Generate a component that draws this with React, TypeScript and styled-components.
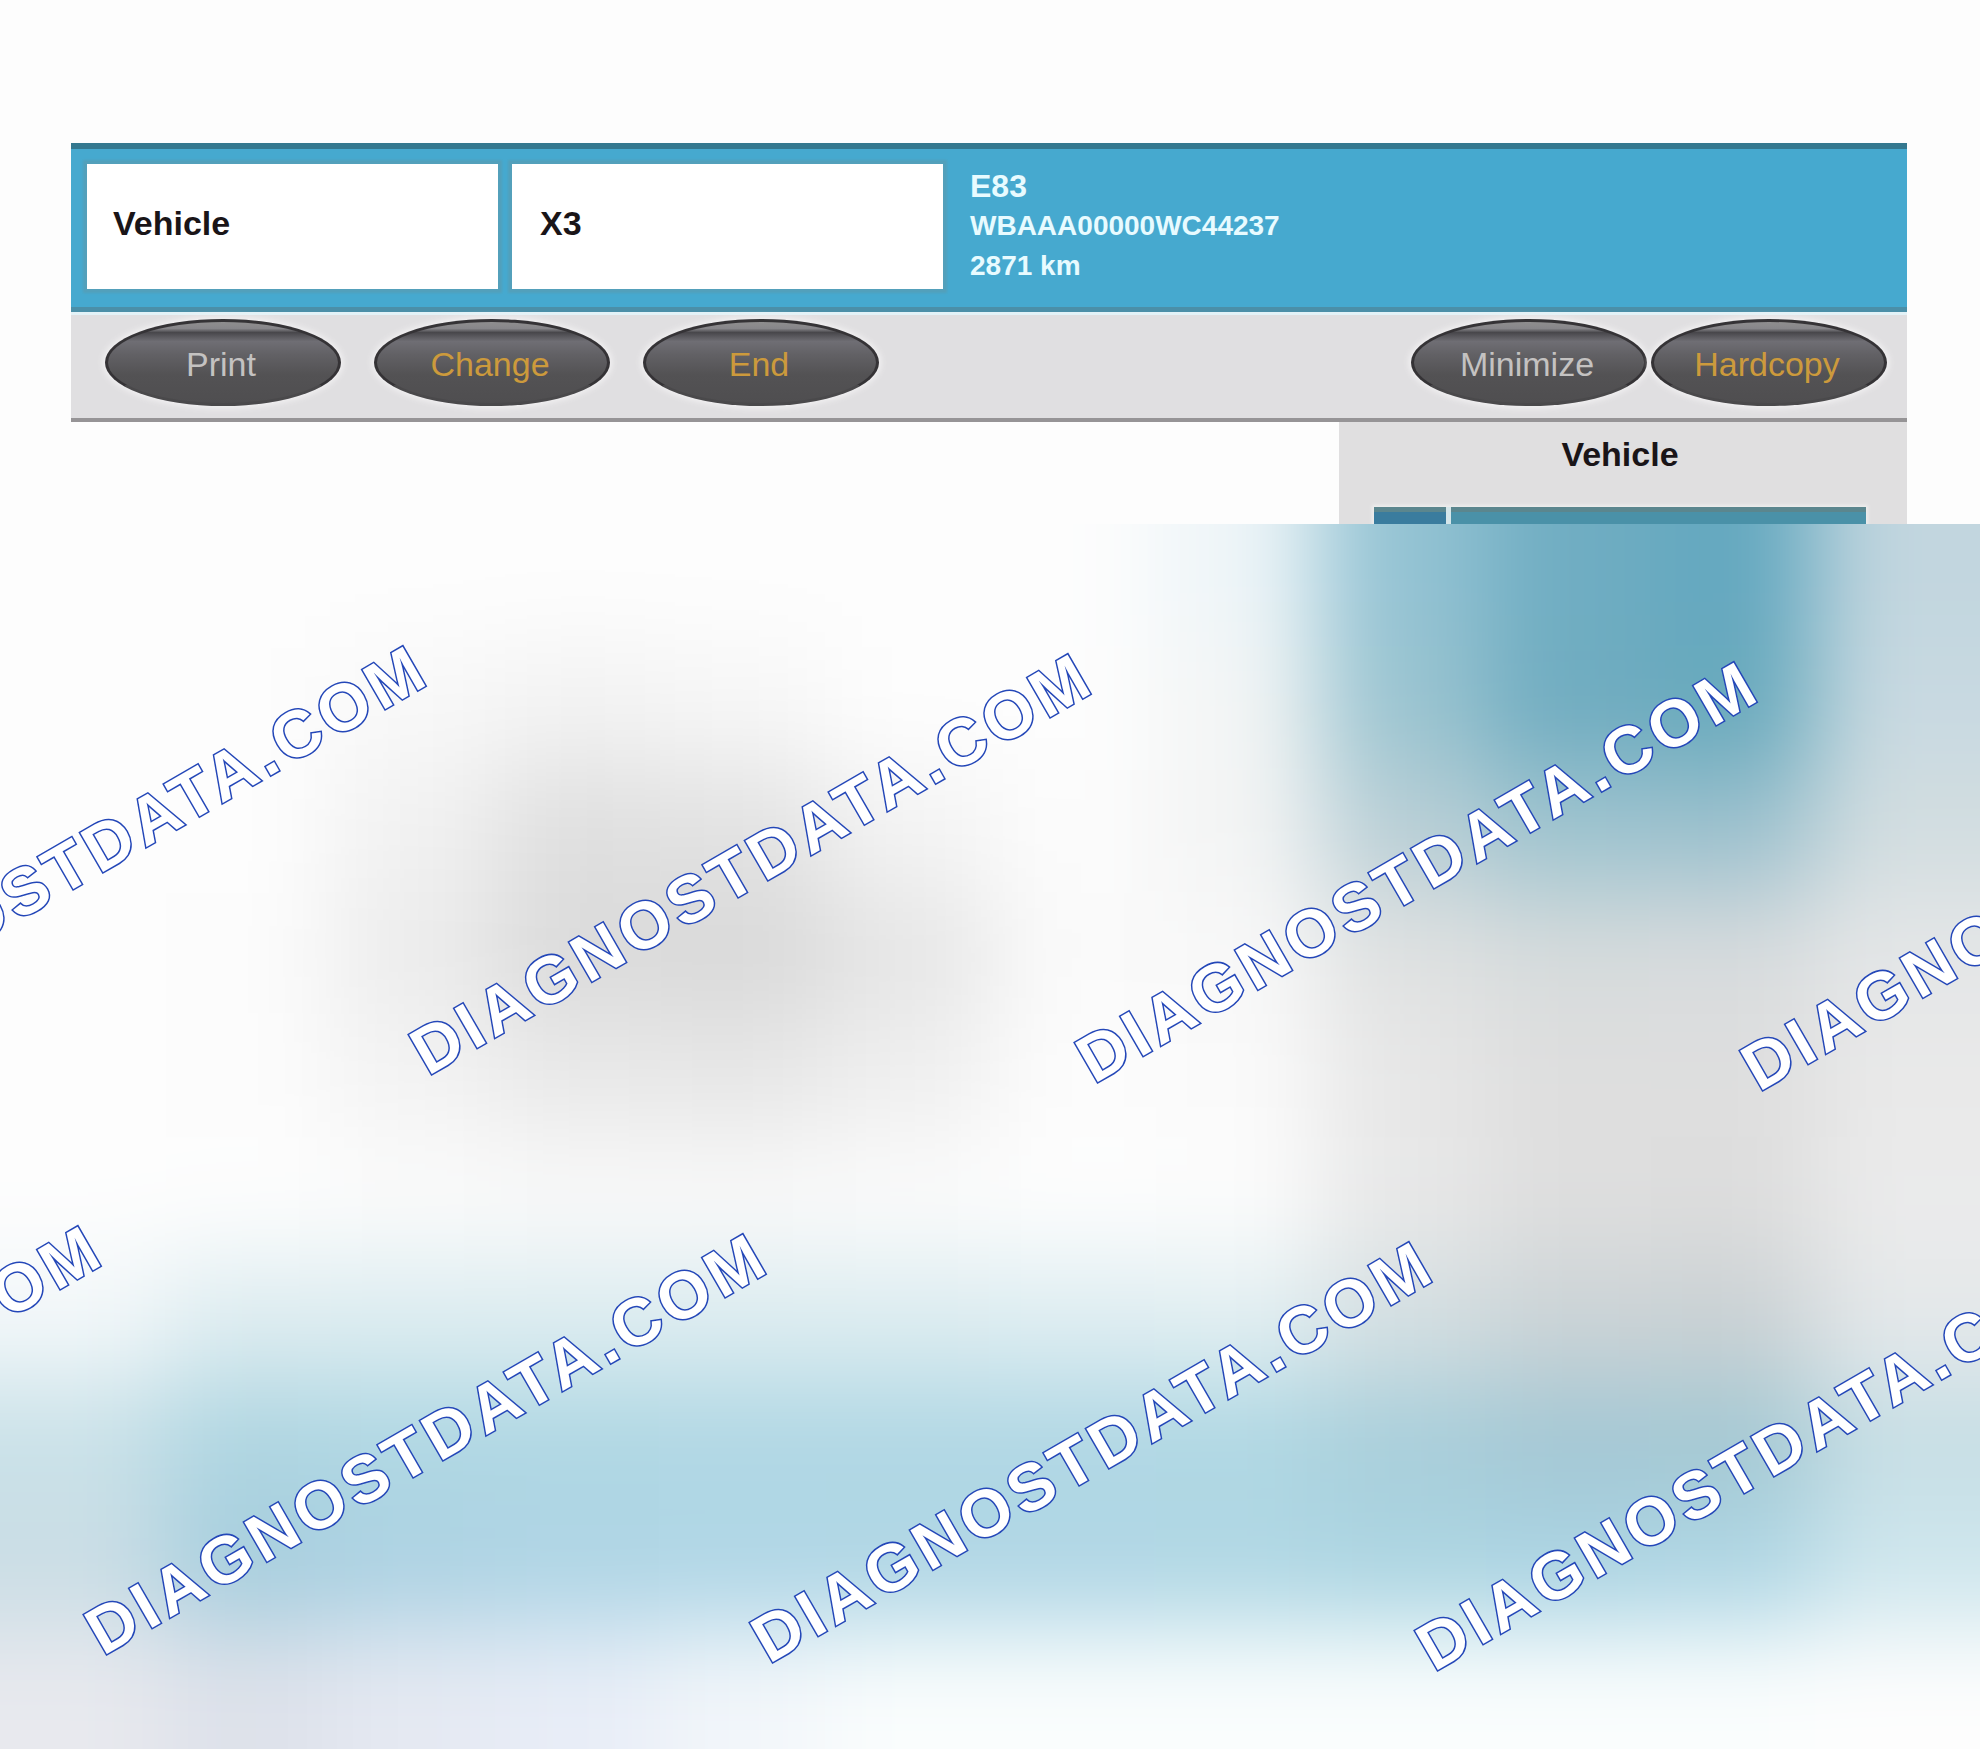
import React from "react";
import styled, { createGlobalStyle } from "styled-components";

const GlobalStyle = createGlobalStyle`
  * { box-sizing: border-box; }
  body {
    margin: 0;
    background: #fdfdfd;
    font-family: "Liberation Sans", Arial, sans-serif;
  }
`;

const Page = styled.main`
  display: flex;
  flex-direction: column;
  min-height: 100vh;
  overflow: hidden;
`;

const Window = styled.section`
  padding: 143px 73px 0 71px;
`;

const Header = styled.header`
  display: flex;
  align-items: stretch;
  padding: 15px 16px 18px;
  border-top: 6px solid #34788f;
  border-bottom: 5px solid #4b8fa8;
  background: #46a9cf;
`;

const Field = styled.div<{ $basis: string; $indent: number }>`
  display: flex;
  align-items: center;
  flex: 0 0 ${(p) => p.$basis};
  height: 125px;
  margin-right: 14px;
  padding: 0 ${(p) => p.$indent}px 8px;
  background: #ffffff;
  box-shadow: 0 0 2px 4px #53a0bb;
  color: #1a1518;
  font-size: 34px;
  font-weight: bold;
  line-height: 40px;
`;

const Info = styled.div`
  margin: 2px 0 0 13px;
  color: #e8fbff;
  font-size: 28px;
  font-weight: bold;
  line-height: 40px;
`;

const Model = styled.div`
  font-size: 32px;
`;

const Toolbar = styled.nav`
  display: flex;
  justify-content: space-between;
  height: 110px;
  padding: 7px 20px 0 34px;
  border-top: 3px solid #e3f2f7;
  border-bottom: 4px solid #969496;
  background: #e0dfe1;
`;

const Group = styled.div<{ $gap: number }>`
  display: flex;
  gap: ${(p) => p.$gap}px;
`;

const OvalButton = styled.button<{ $accent?: boolean }>`
  width: 236px;
  height: 87px;
  margin-top: -3px;
  padding: 2px 4px 0 0;
  border: 3px solid #353336;
  border-bottom-color: #4a494b;
  border-radius: 50%;
  background: linear-gradient(#8f8e8f 0, #87868a 8%, #48474b 13%, #6f6e74 24%, #626165 40%, #535254 65%, #4f4e50 100%);
  box-shadow: 0 0 6px 2px #f4f3f4;
  color: ${(p) => (p.$accent ? "#cc9a3c" : "#c4c2c1")};
  font-family: inherit;
  font-size: 34px;
  line-height: 40px;
`;

const Body = styled.div`
  display: flex;
  justify-content: flex-end;
`;

const Panel = styled.aside`
  width: 568px;
  padding: 12px 41px 0 35px;
  background: #e0dfe0;
`;

const PanelTitle = styled.h2`
  margin: 0;
  color: #1a1518;
  font-size: 34px;
  font-weight: bold;
  line-height: 40px;
  text-align: center;
`;

const PanelRow = styled.div`
  display: grid;
  grid-template-columns: 72px 1fr;
  gap: 5px;
  height: 17px;
  margin-top: 33px;
  background: #d5e6ea;
  box-shadow: 0 0 3px 2px #eeeeee;
`;

const PanelCell = styled.div<{ $color: string }>`
  border-top: 5px solid #5b868e;
  background: ${(p) => p.$color};
`;

const Haze = styled.section`
  position: relative;
  flex: 1;
  min-height: 1225px;
  overflow: hidden;
`;

/* One spare cell on every side keeps the blur from fading at the edges. */
const Mesh = styled.div`
  position: absolute;
  top: -10%;
  right: calc(-100% / 12);
  bottom: -10%;
  left: calc(-100% / 12);
  display: grid;
  grid-template-columns: repeat(14, 1fr);
  grid-template-rows: repeat(12, 1fr);
  filter: blur(48px);
`;

const Patch = styled.div<{ $color: string }>`
  background: #${(p) => p.$color};
`;

const Watermark = styled.span`
  position: absolute;
  transform: rotate(-30deg);
  transform-origin: 0 100%;
  color: #ffffff;
  font-size: 66px;
  font-weight: bold;
  letter-spacing: 5px;
  line-height: 1;
  white-space: nowrap;
  -webkit-text-stroke: 3px #2447b8;
  paint-order: stroke fill;
  stroke-linejoin: round;
`;

const meshRows = [
  "fdfdfd fdfdfd fdfdfd fdfdfd fdfdfd fdfdfd fdfdfd eef5f8 94c3d3 70adc2 64a8bf c2d6df",
  "fdfdfd fdfdfd f8f8f8 f2f2f2 f6f6f6 fdfdfd fdfdfd f3f5f5 9bc4d0 70acc0 68a9bc c8d9e1",
  "fdfdfd fdfdfd f1f1f1 dfdfdf e2e2e2 f3f3f3 fcfcfc f3f4f4 bacfd6 9fc4cf 9dc1ce d2dde0",
  "fdfdfd fcfcfc ececec dadada d9d9d9 e6e6e6 fafafa f8f8f8 dfe1e1 d6dbdc d7dbdd e4e6e7",
  "fdfdfd fcfcfc f3f3f3 e9e9e9 e7e7e7 efefef fcfcfc fafafa e7e7e7 dedede dedede e9e9e9",
  "fdfdfd fdfdfd fbfbfb f9f9f9 f9f9f9 fbfbfb fdfdfd fcfcfc e8e8e8 dedede dddddd ebebeb",
  "f2f7f9 ddecf0 dcecf0 dcecf0 dcecf0 dcecf0 deedf1 e1eef1 d4dfe2 cbd3d6 cad1d4 e4e8ea",
  "c9e1e8 aed5e1 afd7e3 afd7e3 b0d7e4 b0d7e4 b0d7e4 afd7e3 a8ceda a3c7d4 a3c8d3 c6dee5",
  "cadde5 a7cede add2e3 afd5e5 b0d6e6 b0d6e5 b0d6e5 b0d7e4 acd5e2 abd4e3 afd6e4 cee6ed",
  "e8e9ee dde1ea e5e9f2 e8edf7 f2f6fa fafdfd fafdfd fafdfd fafdfd fafdfd fafdfd fdfdfd",
].map((row) => row.split(" "));

const padEnds = <T,>(items: T[]): T[] => [items[0], ...items, items[items.length - 1]];
const mesh = padEnds(meshRows.map(padEnds));

const watermarks = [
  { x: -232, y: 553 },
  { x: 433, y: 561 },
  { x: 1099, y: 569 },
  { x: 1764, y: 577 },
  { x: -557, y: 1133 },
  { x: 108, y: 1141 },
  { x: 774, y: 1149 },
  { x: 1439, y: 1157 },
];

export default function App() {
  return (
    <>
      <GlobalStyle />
      <Page>
        <Window>
          <Header>
            <Field $basis="411px" $indent={26}>Vehicle</Field>
            <Field $basis="431px" $indent={28}>X3</Field>
            <Info>
              <Model>E83</Model>
              <div>WBAAA00000WC44237</div>
              <div>2871 km</div>
            </Info>
          </Header>
          <Toolbar>
            <Group $gap={33}>
              <OvalButton>Print</OvalButton>
              <OvalButton $accent>Change</OvalButton>
              <OvalButton $accent>End</OvalButton>
            </Group>
            <Group $gap={4}>
              <OvalButton>Minimize</OvalButton>
              <OvalButton $accent>Hardcopy</OvalButton>
            </Group>
          </Toolbar>
          <Body>
            <Panel>
              <PanelTitle>Vehicle</PanelTitle>
              <PanelRow>
                <PanelCell $color="#3a7c9e" />
                <PanelCell $color="#4a91a8" />
              </PanelRow>
            </Panel>
          </Body>
        </Window>
        <Haze>
          <Mesh>
            {mesh.flatMap((row, r) => row.map((color, c) => <Patch key={`${r}-${c}`} $color={color} />))}
          </Mesh>
          {watermarks.map(({ x, y }) => (
            <Watermark key={`${x}-${y}`} style={{ left: x, bottom: `calc(100% - ${y}px)` }}>
              DIAGNOSTDATA.COM
            </Watermark>
          ))}
        </Haze>
      </Page>
    </>
  );
}
